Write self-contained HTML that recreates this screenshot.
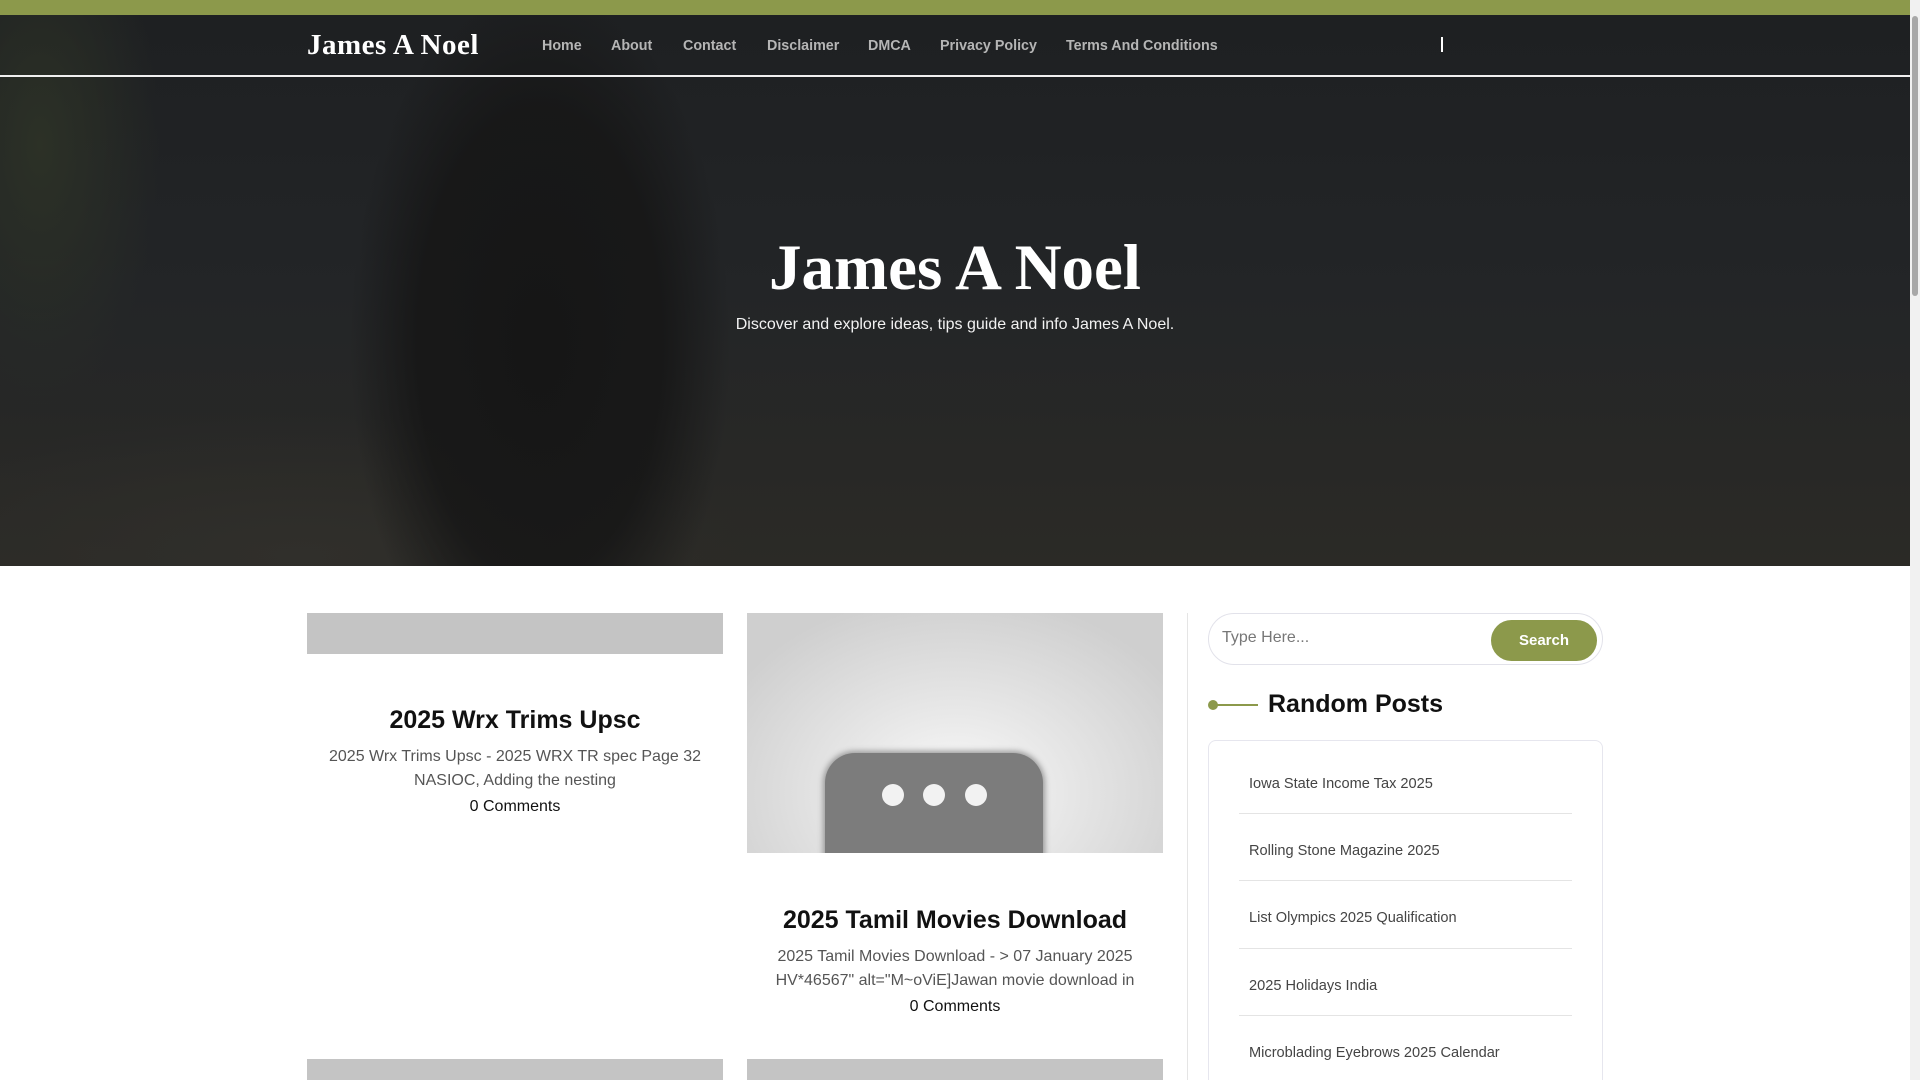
<!DOCTYPE html>
<html><head><meta charset="utf-8"><style>
*{margin:0;padding:0;box-sizing:border-box}
html,body{width:1920px;height:1080px;overflow:hidden;background:#fff;font-family:"Liberation Sans",Arial,sans-serif;position:relative}
.top{position:absolute;left:0;top:0;width:1910px;height:15px;background:#8c994b}
.scroll{position:absolute;right:0;top:0;width:10px;height:1080px;background:#f1f1f1}
.scroll div{position:absolute;left:2px;top:16px;width:6px;height:280px;background:#a8a8a8;border-radius:3px}
.hero{position:absolute;left:0;top:15px;width:1910px;height:551px;overflow:hidden;
background:
radial-gradient(ellipse 190px 360px at 540px 330px,#161616 0%,rgba(22,22,22,.85) 65%,rgba(22,22,22,0) 100%),
radial-gradient(ellipse 450px 140px at 300px 540px,#302f2b 0%,rgba(48,47,43,0) 100%),
radial-gradient(ellipse 120px 260px at 40px 130px,#2c3126 0%,rgba(44,49,38,0) 100%),
linear-gradient(180deg,#1e2022 0%,#232527 50%,#2b2a26 100%)}
.nav{position:absolute;left:0;top:15px;width:1910px;height:62px;border-bottom:2px solid #f0f0f0}
.logo{position:absolute;left:307px;top:14px;font-family:"Liberation Serif",serif;font-weight:bold;font-size:29px;color:#fff;letter-spacing:.5px}
.links{position:absolute;top:23px;left:0;font-size:14.3px;font-weight:bold;color:#b5b5b5}
.links span{position:absolute;white-space:nowrap}
.vbar{position:absolute;left:1441px;top:22px;width:2px;height:15px;background:#fff}
.ht{position:absolute;left:0;width:1910px;text-align:center;color:#fff}
.h1{top:231px;font-family:"Liberation Serif",serif;font-weight:bold;font-size:65px}
.sub{top:316px;font-size:16px;color:#f2f2f2}
.gr{position:absolute;background:#c4c4c4}
.ct{position:absolute;text-align:center;width:416px}
.ct h2{font-size:25px;font-weight:bold;color:#111;margin-bottom:10px}
.ct p{font-size:16px;color:#555;line-height:24px}
.ct .c{color:#111;margin-top:2px}
.img2{position:absolute;left:747px;top:613px;width:416px;height:240px;overflow:hidden;background:radial-gradient(ellipse 260px 200px at 50% 75%,#fafafa 0%,#e6e6e6 45%,#cfcfcf 100%)}
.box{position:absolute;left:78px;top:140px;width:218px;height:140px;border-radius:30px;background:#7c7c7c;box-shadow:0 0 6px 2px #999}
.dot{position:absolute;top:171px;width:22px;height:22px;border-radius:50%;background:#f2f2f2}
.div{position:absolute;left:1187px;top:613px;width:1px;height:467px;background:#e5e5e5}
.search{position:absolute;left:1208px;top:613px;width:395px;height:52px;border:1px solid #e2e2ea;border-radius:26px}
.search .ph{position:absolute;left:13px;top:15px;font-size:16px;color:#777}
.search .btn{position:absolute;left:282px;top:6px;width:106px;height:41px;border-radius:21px;background:#8c994b;color:#fff;font-weight:bold;font-size:15px;text-align:center;line-height:41px}
.rp{position:absolute;left:1268px;top:690px;font-size:25px;font-weight:bold;color:#111}
.rl{position:absolute;left:1212px;top:704px;width:46px;height:2px;background:#8c994b}
.rd{position:absolute;left:1208px;top:700px;width:10px;height:10px;border-radius:50%;background:#8c994b}
.list{position:absolute;left:1208px;top:740px;width:395px;height:340px;border:1px solid #e6e6ee;border-bottom:none;border-radius:8px 8px 0 0}
.it{position:absolute;left:1249px;font-size:14.6px;color:#444}
.sep{position:absolute;left:1239px;width:333px;height:1px;background:#e4e4e4}
</style></head><body>
<div class="hero"></div>
<div class="top"></div>
<div class="nav">
<div class="logo">James A Noel</div>
<div class="links"><span style="left:542px">Home</span><span style="left:611px">About</span><span style="left:683px">Contact</span><span style="left:767px">Disclaimer</span><span style="left:868px">DMCA</span><span style="left:940px">Privacy Policy</span><span style="left:1066px">Terms And Conditions</span></div>
<div class="vbar"></div>
</div>
<div class="ht h1">James A Noel</div>
<div class="ht sub">Discover and explore ideas, tips guide and info James A Noel.</div>

<div class="gr" style="left:307px;top:613px;width:416px;height:41px"></div>
<div class="ct" style="left:307px;top:706px"><h2>2025 Wrx Trims Upsc</h2><p>2025 Wrx Trims Upsc - 2025 WRX TR spec Page 32 NASIOC, Adding the nesting</p><p class="c">0 Comments</p></div>

<div class="img2"><div class="box"></div><div class="dot" style="left:135px"></div><div class="dot" style="left:176px"></div><div class="dot" style="left:218px"></div></div>
<div class="ct" style="left:747px;top:906px"><h2>2025 Tamil Movies Download</h2><p>2025 Tamil Movies Download - &gt; 07 January 2025 HV*46567" alt="M~oViE]Jawan movie download in</p><p class="c">0 Comments</p></div>

<div class="gr" style="left:307px;top:1059px;width:416px;height:21px"></div>
<div class="gr" style="left:747px;top:1059px;width:416px;height:21px"></div>
<div class="div"></div>

<div class="search"><span class="ph">Type Here...</span><div class="btn">Search</div></div>
<div class="rd"></div><div class="rl"></div><div class="rp">Random Posts</div>
<div class="list"></div>
<div class="it" style="top:776px">Iowa State Income Tax 2025</div>
<div class="sep" style="top:813px"></div>
<div class="it" style="top:843px">Rolling Stone Magazine 2025</div>
<div class="sep" style="top:880px"></div>
<div class="it" style="top:910px">List Olympics 2025 Qualification</div>
<div class="sep" style="top:948px"></div>
<div class="it" style="top:978px">2025 Holidays India</div>
<div class="sep" style="top:1015px"></div>
<div class="it" style="top:1045px">Microblading Eyebrows 2025 Calendar</div>
<div class="scroll"><div></div></div>
</body></html>
